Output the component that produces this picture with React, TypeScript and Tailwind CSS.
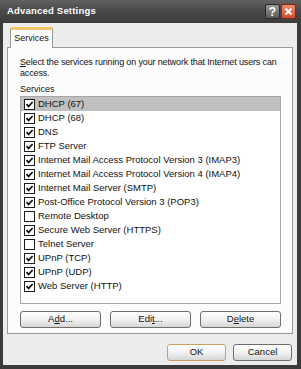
import React from "react";

const items: [string, boolean][] = [
  ["DHCP (67)", true],
  ["DHCP (68)", true],
  ["DNS", true],
  ["FTP Server", true],
  ["Internet Mail Access Protocol Version 3 (IMAP3)", true],
  ["Internet Mail Access Protocol Version 4 (IMAP4)", true],
  ["Internet Mail Server (SMTP)", true],
  ["Post-Office Protocol Version 3 (POP3)", true],
  ["Remote Desktop", false],
  ["Secure Web Server (HTTPS)", true],
  ["Telnet Server", false],
  ["UPnP (TCP)", true],
  ["UPnP (UDP)", true],
  ["Web Server (HTTP)", true],
];

function Check({ on }: { on: boolean }) {
  return (
    <div className="w-[11px] h-[11px] border border-[#1c1c1c] bg-white flex items-center justify-center shrink-0">
      {on && (
        <svg width="9" height="9" viewBox="0 0 9 9">
          <path d="M1.5 4.2 L3.6 6.4 L7.6 2" stroke="#111" strokeWidth="1.7" fill="none" />
        </svg>
      )}
    </div>
  );
}

function Btn({ children, w, def }: { children: React.ReactNode; w: string; def?: boolean }) {
  return (
    <div
      className={`${w} h-[17px] rounded-[3px] border ${def ? "border-[#c9a15a]" : "border-[#6f6f6f]"} bg-gradient-to-b from-[#ffffff] via-[#f2f2f2] to-[#d6d6d6] flex items-center justify-center text-[9.5px] text-[#111]`}
    >
      {children}
    </div>
  );
}

export default function App() {
  return (
    <div
      className="w-[301px] h-[369px] bg-[#3b3b3b] flex flex-col"
      style={{ fontFamily: '"Liberation Sans", Arial, sans-serif' }}
    >
      <div className="h-[23px] shrink-0 bg-gradient-to-b from-[#626262] via-[#484848] to-[#3c3c3c] flex items-center pl-[7px] pr-[5px]">
        <div className="text-white font-bold text-[9.5px] tracking-[0.2px] flex-1">Advanced Settings</div>
        <div className="w-[15px] h-[15px] rounded-[2px] border border-[#2a2a2a] bg-gradient-to-b from-[#9a9a9a] to-[#5a5a5a] flex items-center justify-center text-white font-bold text-[12px] leading-none mr-[1px]">
          ?
        </div>
        <div className="w-[15px] h-[15px] rounded-[2px] border border-[#7a2a1a] bg-gradient-to-b from-[#f08a6a] to-[#d24a2a] flex items-center justify-center">
          <svg width="9" height="9" viewBox="0 0 9 9">
            <path d="M1.5 1.5 L7.5 7.5 M7.5 1.5 L1.5 7.5" stroke="white" strokeWidth="1.8" />
          </svg>
        </div>
      </div>
      <div className="flex-1 ml-[3px] mr-[4px] mb-[4px] bg-[#ececec] flex flex-col pt-[4px]">
        <div className="flex pl-[7px]">
          <div className="w-[43px] h-[21px] bg-[#fcfcfc] border border-[#9a9a9a] border-b-0 border-t-[3px] border-t-[#f3c46c] rounded-t-[2px] flex items-center justify-center text-[9px] text-[#111] relative z-10 -mb-[1px]">
            Services
          </div>
        </div>
        <div className="mx-[4px] h-[287px] border border-[#9a9a9a] bg-[#fcfcfd] flex flex-col pl-[12px] pr-[11px] pt-[9px]">
          <div className="text-[9px] leading-[11px] tracking-[-0.15px] text-[#111]">
            <span className="underline">S</span>elect the services running on your network that Internet users can access.
          </div>
          <div className="text-[9px] leading-[11px] text-[#111] mt-[5px]">Services</div>
          <div className="mt-[1px] h-[208px] border border-[#a5a5a5] bg-white flex flex-col">
            {items.map(([t, on], i) => (
              <div
                key={t}
                className={`h-[14px] flex items-center pl-[3px] gap-[3px] text-[9.5px] text-[#111] ${i === 0 ? "bg-[#c0c0c0]" : ""}`}
              >
                <Check on={on} />
                <span className="whitespace-nowrap">{t}</span>
              </div>
            ))}
          </div>
          <div className="mt-[7px] flex justify-between">
            <Btn w="w-[81px]">
              A<span className="underline">d</span>d...
            </Btn>
            <Btn w="w-[81px]">
              Edi<span className="underline">t</span>...
            </Btn>
            <Btn w="w-[81px]">
              D<span className="underline">e</span>lete
            </Btn>
          </div>
        </div>
        <div className="mt-[10px] flex justify-end gap-[7px] pr-[5px]">
          <Btn w="w-[59px]" def>
            OK
          </Btn>
          <Btn w="w-[59px]">Cancel</Btn>
        </div>
      </div>
    </div>
  );
}
